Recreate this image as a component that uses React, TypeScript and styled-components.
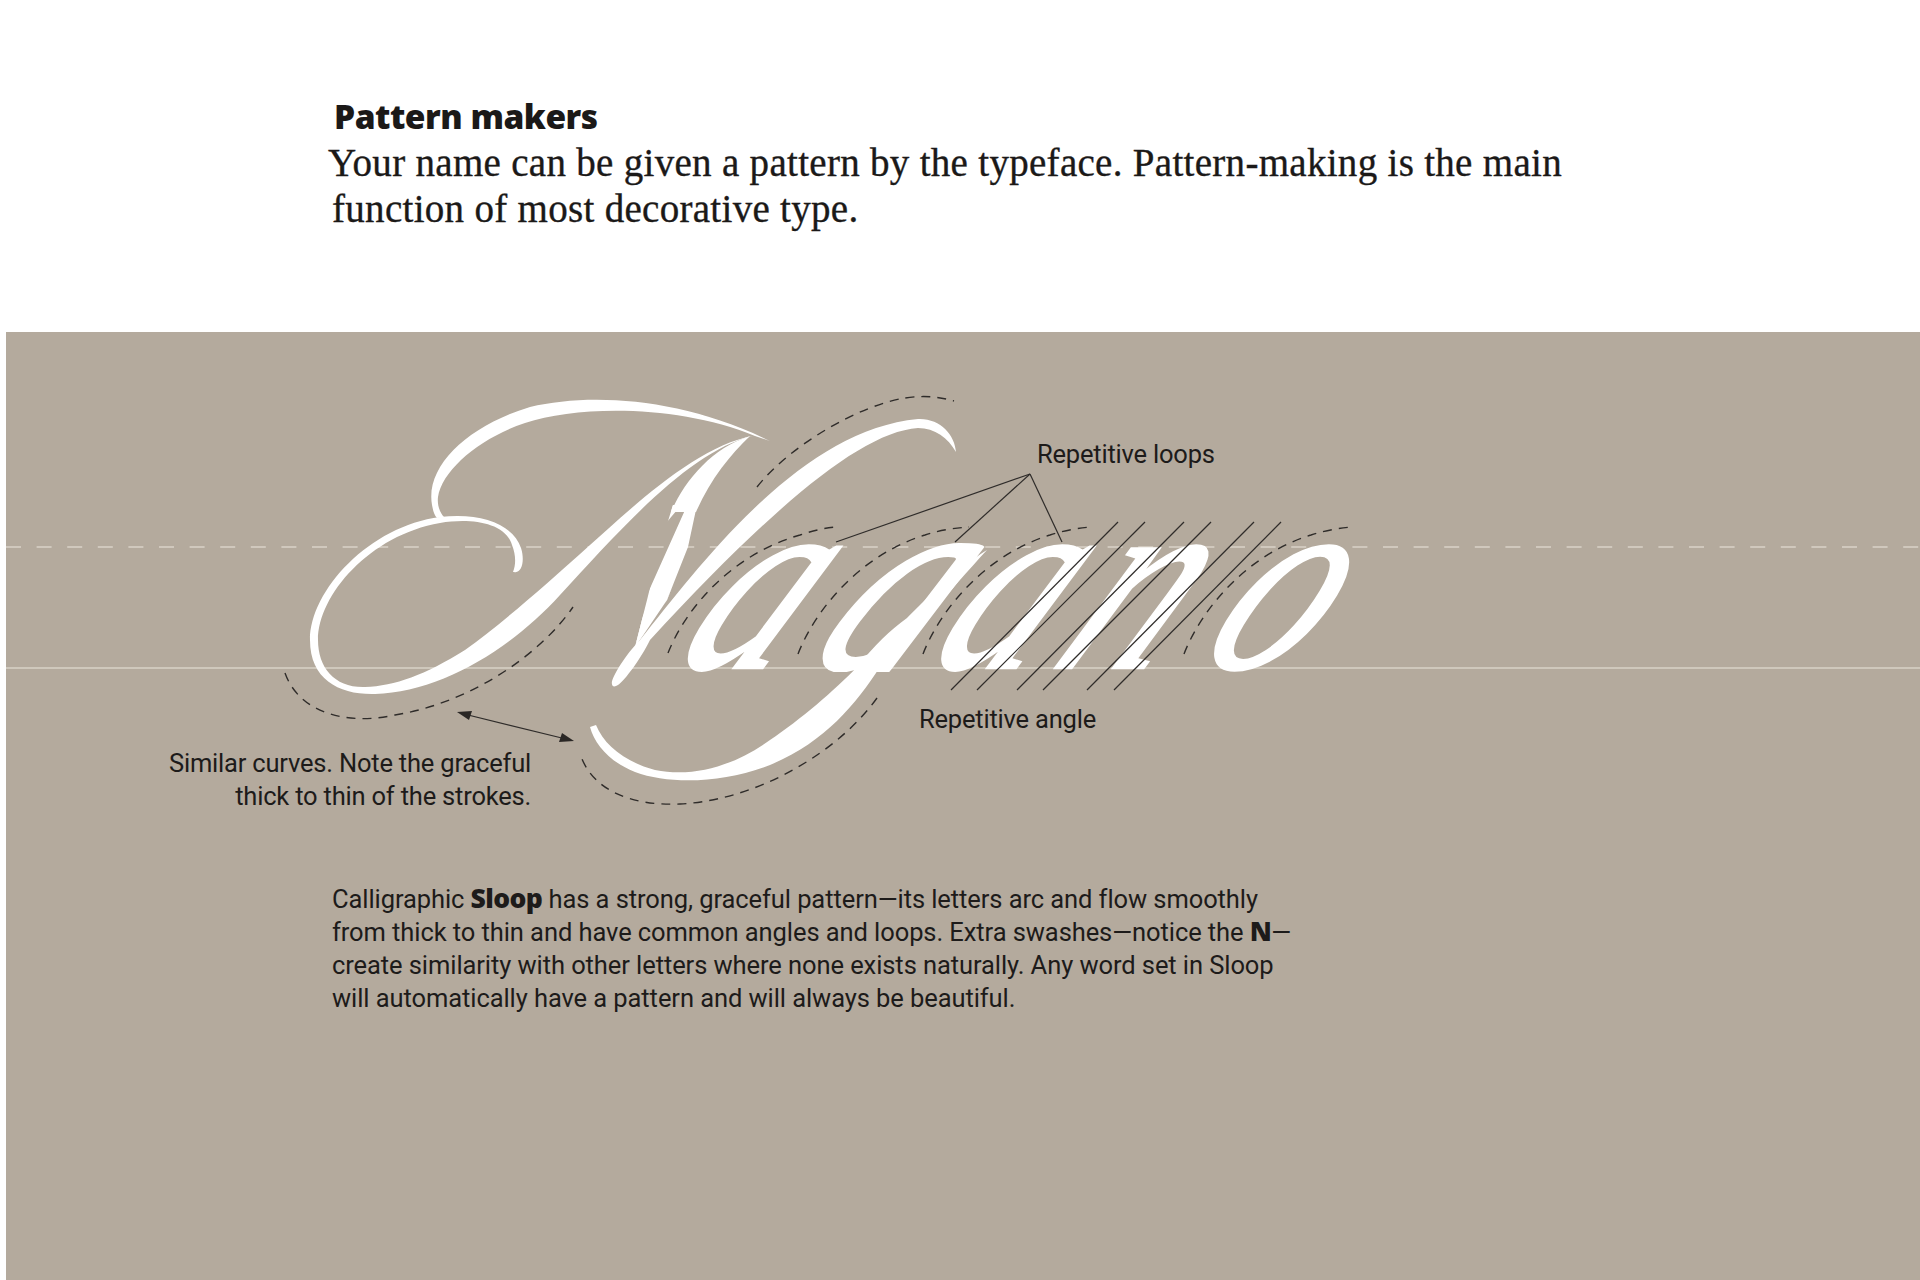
import React from "react";
import styled, { createGlobalStyle } from "styled-components";

const Global = createGlobalStyle`
  html, body { margin: 0; padding: 0; background: #ffffff; }
`;

const Page = styled.main`
  width: 1920px;
  height: 1280px;
  display: flex;
  flex-direction: column;
  overflow: hidden;
`;

const Header = styled.header`
  height: 332px;
  box-sizing: border-box;
  padding: 97px 0 0 334px;
  color: #1b1918;
`;

const Title = styled.h1`
  margin: 0;
  font: 800 33.5px/38px "Open Sans", sans-serif;
  letter-spacing: -0.5px;
`;

const Lead = styled.p`
  margin: 5px 0 0 -2px;
  font: 400 39px/46px "Liberation Serif", serif;
  letter-spacing: 0.3px;
  text-indent: -4px;
  -webkit-text-stroke: 0.35px #1b1918;
`;

const Panel = styled.section`
  flex: 1;
  margin-left: 6px;
  background: #b4aa9d;
  color: #1d1b1a;
`;

const Figure = styled.figure`
  position: relative;
  margin: 0;
  height: 551px;
`;

const Art = styled.svg`
  position: absolute;
  left: 0;
  top: 0;
  display: block;
`;

const Word = styled.text<{ $weight: number }>`
  fill: #ffffff;
  stroke: #ffffff;
  stroke-width: ${(p) => p.$weight}px;
  font-family: "Liberation Serif", serif;
  font-style: italic;
`;

const SingleStory = styled.tspan`
  font-family: "DejaVu Serif", serif;
  font-size: 232px;
`;

const Guide = styled.line<{ $dashed?: boolean }>`
  stroke: #d9d2c7;
  stroke-width: 1.5;
  stroke-dasharray: ${(p) => (p.$dashed ? "15 15.6" : "none")};
`;

const Swash = styled.path`
  fill: #ffffff;
`;

const Dashed = styled.path`
  fill: none;
  stroke: #2f2c2a;
  stroke-width: 1.4;
  stroke-dasharray: 9 7;
`;

const Rule = styled.line`
  stroke: #2f2c2a;
  stroke-width: 1.2;
`;

const Head = styled.polygon`
  fill: #2a2725;
`;

const Callout = styled.figcaption<{ $left: number; $top: number; $right?: boolean }>`
  position: absolute;
  left: ${(p) => p.$left}px;
  top: ${(p) => p.$top}px;
  font: 400 25.5px/33px Roboto, sans-serif;
  letter-spacing: -0.2px;
  white-space: nowrap;
  text-align: ${(p) => (p.$right ? "right" : "left")};
`;

const Body = styled.p`
  margin: 0;
  padding-left: 326px;
  font: 400 25.5px/33px Roboto, sans-serif;
  letter-spacing: -0.08px;
  white-space: nowrap;
`;

const Heavy = styled.b`
  font-family: "Open Sans", sans-serif;
  font-size: 26.5px;
  font-weight: 800;
  letter-spacing: -0.6px;
  line-height: 0;
`;

const hatch = [
  [951, 1118],
  [977, 1145],
  [1017, 1184],
  [1043, 1211],
  [1087, 1254],
  [1114, 1281],
];

const arcs = [
  "M757 487C790 445 860 405 905 398C925 395 940 397 954 401",
  "M285 673C300 715 350 725 395 715C470 703 540 655 573 607",
  "M668 653C685 610 730 555 800 535C815 530 825 528 836 527",
  "M798 654C815 610 860 555 925 535C940 530 955 528 969 527",
  "M923 654C940 610 985 555 1050 535C1065 530 1080 528 1091 527",
  "M1184 654C1201 610 1246 555 1311 535C1326 530 1341 528 1352 527",
  "M877 698C840 750 760 800 680 804C630 806 595 790 582 759",
];

const swashes = [
  // upper flourish
  "M432 505C425 465 470 425 530 407C590 393 680 397 770 441L755 436C680 405 580 405 525 423C480 438 442 470 438 497C437 505 440 513 444 517L437 518C434 515 433 510 432 505Z",
  // lower loop running into the long diagonal
  "M514 572C522 574 525 560 521 548C513 524 480 512 440 517C370 526 310 590 310 640C310 680 340 695 375 694C440 692 510 650 560 595C620 530 690 450 753 436C700 445 640 500 590 545C540 590 500 625 465 650C425 675 395 686 365 687C335 688 318 668 318 640C318 595 370 535 440 523C470 518 505 522 512 545C516 555 516 565 513 572Z",
  // foot and rising flag
  "M612 684C610 680 625 655 640 640C700 565 800 430 918 419C940 418 955 435 956 452C948 438 935 428 918 428C860 432 770 510 650 640C640 660 625 680 618 685C615 687 612 687 612 684Z",
  // head of the heavy stroke
  "M671 512C685 480 712 448 750 436C730 455 710 480 696 512Z",
  // tail of the g
  "M987 550C950 590 910 640 880 667C855 705 825 742 770 765C725 783 670 785 635 772C610 762 595 745 590 727L596 725C604 745 625 762 655 770C695 778 735 765 770 740C800 720 835 690 857 667C875 645 890 630 907 618C925 600 955 570 987 550Z",
];

export default function App() {
  return (
    <Page>
      <Global />
      <Header>
        <Title>Pattern makers</Title>
        <Lead>
          Your name can be given a pattern by the typeface. Pattern-making is the main
          <br />
          function of most decorative type.
        </Lead>
      </Header>
      <Panel>
        <Figure>
          <Art width="1914" height="551" viewBox="6 332 1914 551" aria-hidden>
            <defs>
              <clipPath id="capital">
                <polygon points="673,505 697,505 688,547 667,600 642,637 635,647 647,600 660,547" />
              </clipPath>
              <clipPath id="lower">
                <rect x="600" y="500" width="900" height="172" />
              </clipPath>
            </defs>
            <Guide $dashed x1="6" y1="547" x2="1920" y2="547" />
            <Guide x1="6" y1="668" x2="1920" y2="668" />
            {arcs.map((d) => (
              <Dashed key={d} d={d} />
            ))}
            <g clipPath="url(#capital)">
              <g transform="translate(507 668) skewX(-36) scale(0.7 1)">
                <Word $weight={14} fontSize="345">
                  N
                </Word>
              </g>
            </g>
            <g clipPath="url(#lower)">
              <g transform="translate(0 668) skewX(-31) scale(0.82 1)">
                <Word $weight={2.5} fontSize="260">
                  <tspan x="817">a</tspan>
                  <SingleStory x="972">g</SingleStory>
                  <tspan x="1126 1277 1454">ano</tspan>
                </Word>
              </g>
            </g>
            {swashes.map((d) => (
              <Swash key={d} d={d} />
            ))}
            {hatch.map(([a, b]) => (
              <Rule key={a} x1={a} y1="690" x2={b} y2="522" />
            ))}
            <Rule x1="1030" y1="474" x2="836" y2="542" />
            <Rule x1="1030" y1="474" x2="955" y2="542" />
            <Rule x1="1030" y1="474" x2="1062" y2="542" />
            <Rule x1="460" y1="713" x2="570" y2="740" />
            <Head points="457,712 472,711 469,720" />
            <Head points="574,741 559,742 562,733" />
          </Art>
          <Callout $left={1031} $top={106}>
            Repetitive loops
          </Callout>
          <Callout $left={913} $top={371}>
            Repetitive angle
          </Callout>
          <Callout $left={163} $top={415} $right>
            Similar curves. Note the graceful
            <br />
            thick to thin of the strokes.
          </Callout>
        </Figure>
        <Body>
          Calligraphic <Heavy>Sloop</Heavy> has a strong, graceful pattern—its letters arc and flow smoothly
          <br />
          from thick to thin and have common angles and loops. Extra swashes—notice the <Heavy>N</Heavy>—
          <br />
          create similarity with other letters where none exists naturally. Any word set in Sloop
          <br />
          will automatically have a pattern and will always be beautiful.
        </Body>
      </Panel>
    </Page>
  );
}
